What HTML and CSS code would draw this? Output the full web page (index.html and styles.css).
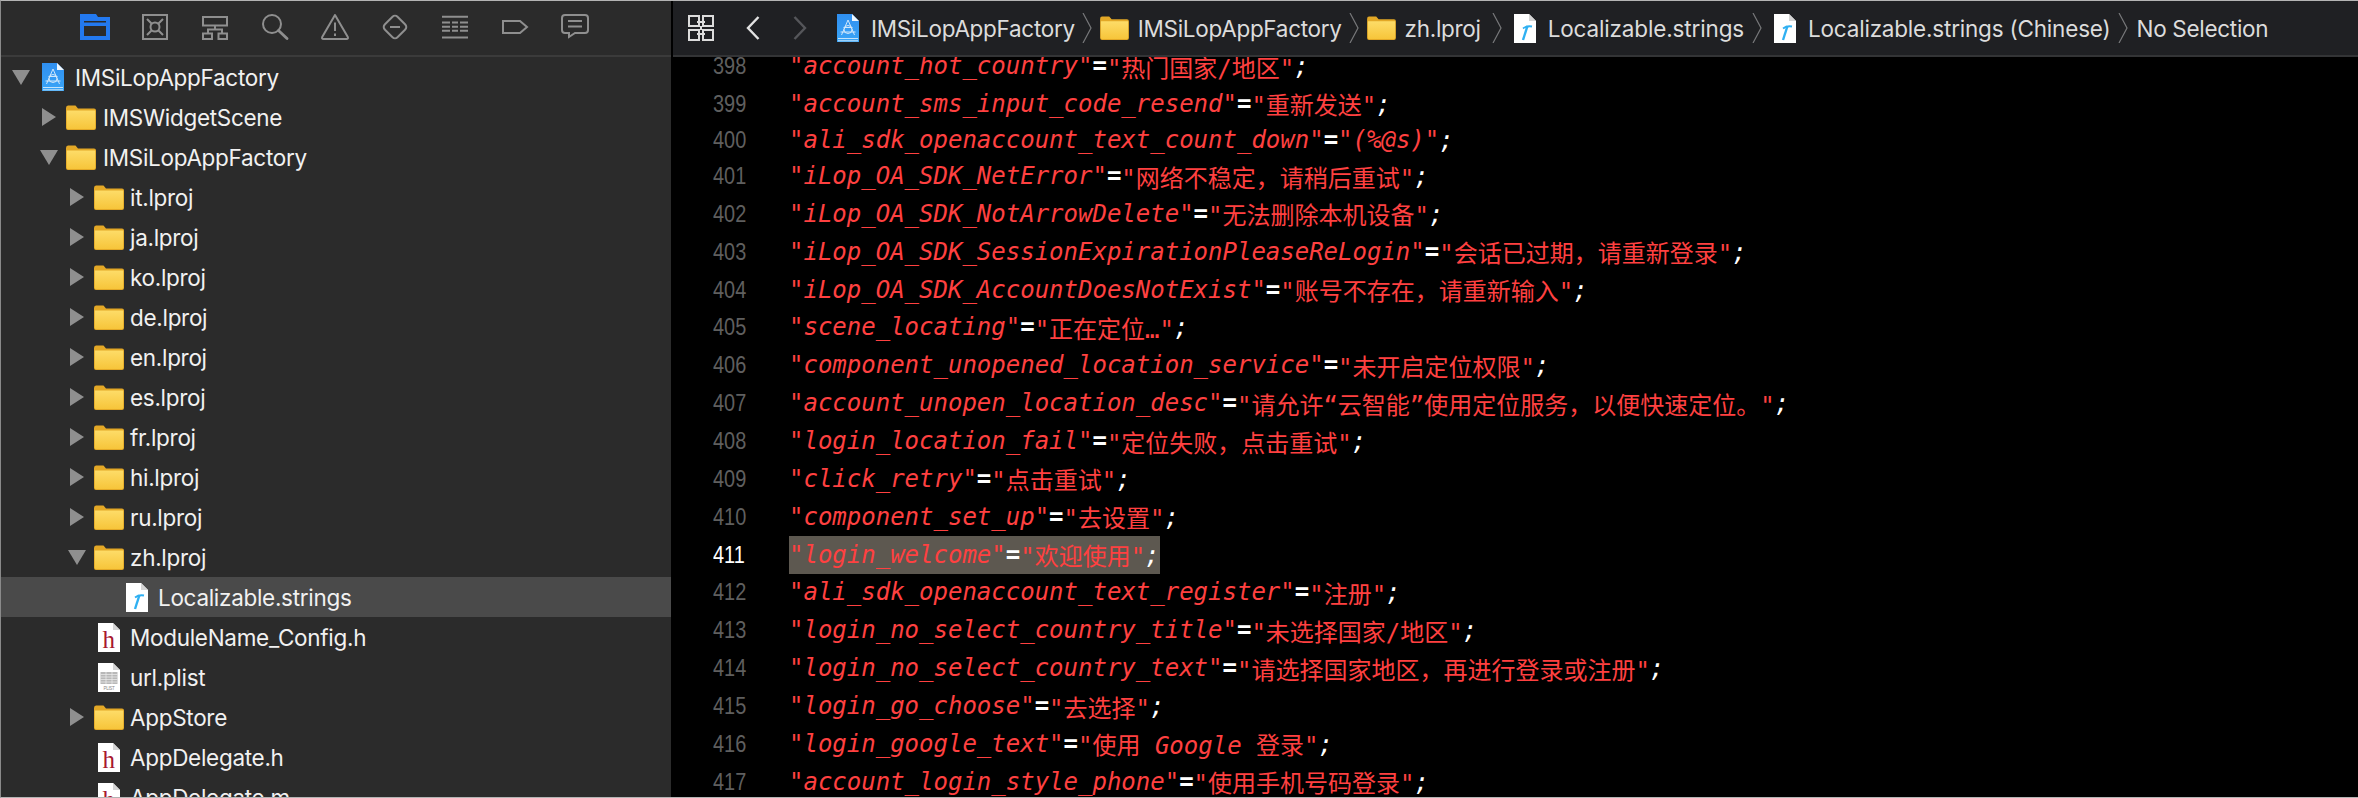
FILE: index.html
```html
<!DOCTYPE html>
<html lang="en">
<head>
<meta charset="utf-8">
<title>Xcode</title>
<link rel="stylesheet" href="styles.css">
</head>
<body>
<svg class="defs" width="0" height="0" aria-hidden="true">
  <defs>
    <linearGradient id="fold" x1="0" y1="0" x2="0" y2="1"><stop offset="0" stop-color="#fddc68"/><stop offset="1" stop-color="#f7c53a"/></linearGradient>
    <linearGradient id="blue" x1="0" y1="0" x2="0" y2="1"><stop offset="0" stop-color="#2f8ff0"/><stop offset="1" stop-color="#3aa5f7"/></linearGradient>
    <symbol id="folder" viewBox="0 0 30 25">
      <path d="M0 3Q0 0.500 2 0.500H9.500L12 3.500H28Q30 3.500 30 5.500V23Q30 25 28 25H2Q0 25 0 23Z" fill="#e3a826"/>
      <path d="M0.800 5.500H29.200V23Q29.200 24 28 24H2Q0.800 24 0.800 23Z" fill="url(#fold)"/>
    </symbol>
    <symbol id="app" viewBox="0 0 22 28">
      <path d="M0 0H15L22 7V28H0Z" fill="url(#blue)"/>
      <path d="M15 0L22 7H15Z" fill="#eef6fd"/>
      <path d="M1 24.500H21M1 26.800H21" stroke="#d5ebfc" stroke-width="0.900"/>
      <g fill="none" stroke="#cfe7fb" stroke-width="1"><path d="M11 6L4.500 21M11 6L17.500 21M3.500 18H18.500M6.500 13.500H15.500"/><circle cx="11" cy="15.500" r="4"/></g>
    </symbol>
    <symbol id="strings" viewBox="0 0 22 29">
      <path d="M0 0H15L22 7V29H0Z" fill="#fff"/>
      <path d="M15 0L22 7H15Z" fill="#d4d4d4"/>
      <path d="M13.500 12L9 26" stroke="#2fb0f2" stroke-width="2.400" fill="none"/>
      <path d="M9 14.500Q13 11.500 18 12.500" stroke="#2fb0f2" stroke-width="1.800" fill="none"/>
    </symbol>
    <symbol id="hfile" viewBox="0 0 22 29">
      <path d="M0 0H15L22 7V29H0Z" fill="#fff"/>
      <path d="M15 0L22 7H15Z" fill="#d4d4d4"/>
      <text x="4.500" y="25" class="hglyph">h</text>
    </symbol>
    <symbol id="plist" viewBox="0 0 22 29">
      <path d="M0 0H15L22 7V29H0Z" fill="#fff"/>
      <path d="M15 0L22 7H15Z" fill="#d4d4d4"/>
      <path d="M2.500 9H19.500V21H2.500Z" fill="#b8b8b8"/>
      <path d="M2.500 11.500H19.500M2.500 14H19.500M2.500 16.500H19.500M2.500 19H19.500M8 9V21M14 9V21" stroke="#eee" stroke-width="0.700"/>
      <text x="11" y="27.300" class="pglyph">PLIST</text>
    </symbol>
  </defs>
</svg>
<div class="window">
  <aside class="sidebar">
    <nav class="tabs">
      <svg class="tab" viewBox="0 0 30 26"><path fill-rule="evenodd" d="M0 0H16L18 3H30V26H0ZM4 7V8.500H26V7ZM4 12V22H26V12Z" fill="#2379f0"/></svg>
      <svg class="tab" viewBox="0 0 30 26"><g fill="none" stroke="#8f8f8f" stroke-width="2"><path d="M3 1H27V25H3Z"/><circle cx="15" cy="13" r="4.500"/><path d="M7 5L12 10M23 5L18 10M7 21L12 16M23 21L18 16"/></g></svg>
      <svg class="tab" viewBox="0 0 30 26"><g fill="none" stroke="#8f8f8f" stroke-width="2"><path d="M3 3H27V11.500H3ZM15 11.500V15.500M8 19.500V15.500H22V19.500M3 19.500H12V25H3ZM18.500 19.500H27V25H18.500Z"/></g></svg>
      <svg class="tab" viewBox="0 0 30 26"><g fill="none" stroke="#8f8f8f"><circle cx="12" cy="10" r="9" stroke-width="2"/><path d="M18.500 16.500L27 24.500" stroke-width="2.800" stroke-linecap="round"/></g></svg>
      <svg class="tab" viewBox="0 0 30 26"><g fill="none" stroke="#8f8f8f" stroke-width="2"><path d="M15 1L27.800 23Q28.500 25 26.500 25H3.500Q1.500 25 2.200 23Z" stroke-linejoin="round"/><path d="M15 8.500V17M15 19.500V22"/></g></svg>
      <svg class="tab" viewBox="0 0 30 26"><g fill="none" stroke="#8f8f8f" stroke-width="2"><rect x="6" y="4" width="18" height="18" rx="3.500" transform="rotate(45 15 13)"/><path d="M10 13H20"/></g></svg>
      <svg class="tab" viewBox="0 0 30 26"><path d="M2 2.800H28M2 8.500H10M12 8.500H18M20 8.500H28M2 12.700H10M12 12.700H18M20 12.700H28M2 16.800H10M12 16.800H18M20 16.800H28M2 23.500H28" fill="none" stroke="#8f8f8f" stroke-width="2"/></svg>
      <svg class="tab" viewBox="0 0 30 26"><path d="M3 7H20L27 13L20 19H3Z" fill="none" stroke="#8f8f8f" stroke-width="2"/></svg>
      <svg class="tab" viewBox="0 0 30 26"><path d="M5 1H25Q28 1 28 4V16Q28 19 25 19H15L9 23V19H5Q2 19 2 16V4Q2 1 5 1ZM8 7H22M8 12.500H22" fill="none" stroke="#8f8f8f" stroke-width="2"/></svg>
    </nav>
    <ul class="tree">
      <li class="row d0"><span class="tri open"></span><svg class="ico file root"><use href="#app"/></svg><span>IMSiLopAppFactory</span></li>
      <li class="row d1"><span class="tri"></span><svg class="ico fold"><use href="#folder"/></svg><span>IMSWidgetScene</span></li>
      <li class="row d1"><span class="tri open"></span><svg class="ico fold"><use href="#folder"/></svg><span>IMSiLopAppFactory</span></li>
      <li class="row d2"><span class="tri"></span><svg class="ico fold"><use href="#folder"/></svg><span>it.lproj</span></li>
      <li class="row d2"><span class="tri"></span><svg class="ico fold"><use href="#folder"/></svg><span>ja.lproj</span></li>
      <li class="row d2"><span class="tri"></span><svg class="ico fold"><use href="#folder"/></svg><span>ko.lproj</span></li>
      <li class="row d2"><span class="tri"></span><svg class="ico fold"><use href="#folder"/></svg><span>de.lproj</span></li>
      <li class="row d2"><span class="tri"></span><svg class="ico fold"><use href="#folder"/></svg><span>en.lproj</span></li>
      <li class="row d2"><span class="tri"></span><svg class="ico fold"><use href="#folder"/></svg><span>es.lproj</span></li>
      <li class="row d2"><span class="tri"></span><svg class="ico fold"><use href="#folder"/></svg><span>fr.lproj</span></li>
      <li class="row d2"><span class="tri"></span><svg class="ico fold"><use href="#folder"/></svg><span>hi.lproj</span></li>
      <li class="row d2"><span class="tri"></span><svg class="ico fold"><use href="#folder"/></svg><span>ru.lproj</span></li>
      <li class="row d2"><span class="tri open"></span><svg class="ico fold"><use href="#folder"/></svg><span>zh.lproj</span></li>
      <li class="row d3 selected"><svg class="ico file"><use href="#strings"/></svg><span>Localizable.strings</span></li>
      <li class="row d2"><span class="tri none"></span><svg class="ico file"><use href="#hfile"/></svg><span>ModuleName_Config.h</span></li>
      <li class="row d2"><span class="tri none"></span><svg class="ico file"><use href="#plist"/></svg><span>url.plist</span></li>
      <li class="row d2"><span class="tri"></span><svg class="ico fold"><use href="#folder"/></svg><span>AppStore</span></li>
      <li class="row d2"><span class="tri none"></span><svg class="ico file"><use href="#hfile"/></svg><span>AppDelegate.h</span></li>
      <li class="row d2"><span class="tri none"></span><svg class="ico file"><use href="#hfile"/></svg><span>AppDelegate.m</span></li>
    </ul>
  </aside>
  <main class="editor">
    <header class="crumbs">
      <svg class="grid-btn" viewBox="0 0 26 26"><g fill="none" stroke="#dcdcdc" stroke-width="2"><path d="M1 1H11V11H1ZM15 1H25V11H15ZM1 15H11V25H1ZM15 15H25V25H15Z"/><path d="M9 7H17M13 11V15M9 19H17"/></g></svg>
      <svg class="nav" viewBox="0 0 14 24"><path d="M12.500 1L2 12L12.500 23" fill="none" stroke="#e2e2e2" stroke-width="2.400"/></svg>
      <svg class="nav next" viewBox="0 0 14 24"><path d="M1.500 1L12 12L1.500 23" fill="none" stroke="#55565a" stroke-width="2.400"/></svg>
      <svg class="cico first"><use href="#app"/></svg><span class="tight">IMSiLopAppFactory</span>
      <svg class="sep" viewBox="0 0 10 30"><path d="M1 0L9 15L1 30" fill="none" stroke="#77787a" stroke-width="1.200"/></svg>
      <svg class="cfold"><use href="#folder"/></svg><span class="tight">IMSiLopAppFactory</span>
      <svg class="sep" viewBox="0 0 10 30"><path d="M1 0L9 15L1 30" fill="none" stroke="#77787a" stroke-width="1.200"/></svg>
      <svg class="cfold"><use href="#folder"/></svg><span class="roomy">zh.lproj</span>
      <svg class="sep" viewBox="0 0 10 30"><path d="M1 0L9 15L1 30" fill="none" stroke="#77787a" stroke-width="1.200"/></svg>
      <svg class="cico"><use href="#strings"/></svg><span class="wide">Localizable.strings</span>
      <svg class="sep" viewBox="0 0 10 30"><path d="M1 0L9 15L1 30" fill="none" stroke="#77787a" stroke-width="1.200"/></svg>
      <svg class="cico"><use href="#strings"/></svg><span class="wider">Localizable.strings (Chinese)</span>
      <svg class="sep" viewBox="0 0 10 30"><path d="M1 0L9 15L1 30" fill="none" stroke="#77787a" stroke-width="1.200"/></svg>
      <span>No Selection</span>
    </header>
    <div class="code">
      <div class="lines">
      <div class="line"><span class="no">398</span><span class="src"><i>"account_hot_country"</i><b>=</b><i>"<span class="cn">热门国家/地区</span>"</i><em>;</em></span></div>
      <div class="line"><span class="no">399</span><span class="src"><i>"account_sms_input_code_resend"</i><b>=</b><i>"<span class="cn">重新发送</span>"</i><em>;</em></span></div>
      <div class="line short"><span class="no">400</span><span class="src"><i>"ali_sdk_openaccount_text_count_down"</i><b>=</b><i>"(%@s)"</i><em>;</em></span></div>
      <div class="line"><span class="no">401</span><span class="src"><i>"iLop_OA_SDK_NetError"</i><b>=</b><i>"<span class="cn">网络不稳定，请稍后重试</span>"</i><em>;</em></span></div>
      <div class="line"><span class="no">402</span><span class="src"><i>"iLop_OA_SDK_NotArrowDelete"</i><b>=</b><i>"<span class="cn">无法删除本机设备</span>"</i><em>;</em></span></div>
      <div class="line"><span class="no">403</span><span class="src"><i>"iLop_OA_SDK_SessionExpirationPleaseReLogin"</i><b>=</b><i>"<span class="cn">会话已过期，请重新登录</span>"</i><em>;</em></span></div>
      <div class="line"><span class="no">404</span><span class="src"><i>"iLop_OA_SDK_AccountDoesNotExist"</i><b>=</b><i>"<span class="cn">账号不存在，请重新输入</span>"</i><em>;</em></span></div>
      <div class="line"><span class="no">405</span><span class="src"><i>"scene_locating"</i><b>=</b><i>"<span class="cn">正在定位…</span>"</i><em>;</em></span></div>
      <div class="line"><span class="no">406</span><span class="src"><i>"component_unopened_location_service"</i><b>=</b><i>"<span class="cn">未开启定位权限</span>"</i><em>;</em></span></div>
      <div class="line"><span class="no">407</span><span class="src"><i>"account_unopen_location_desc"</i><b>=</b><i>"<span class="cn">请允许“云智能”使用定位服务，以便快速定位。</span>"</i><em>;</em></span></div>
      <div class="line"><span class="no">408</span><span class="src"><i>"login_location_fail"</i><b>=</b><i>"<span class="cn">定位失败，点击重试</span>"</i><em>;</em></span></div>
      <div class="line"><span class="no">409</span><span class="src"><i>"click_retry"</i><b>=</b><i>"<span class="cn">点击重试</span>"</i><em>;</em></span></div>
      <div class="line"><span class="no">410</span><span class="src"><i>"component_set_up"</i><b>=</b><i>"<span class="cn">去设置</span>"</i><em>;</em></span></div>
      <div class="line current"><span class="no">411</span><span class="src"><i>"login_welcome"</i><b>=</b><i>"<span class="cn">欢迎使用</span>"</i><em>;</em></span></div>
      <div class="line"><span class="no">412</span><span class="src"><i>"ali_sdk_openaccount_text_register"</i><b>=</b><i>"<span class="cn">注册</span>"</i><em>;</em></span></div>
      <div class="line"><span class="no">413</span><span class="src"><i>"login_no_select_country_title"</i><b>=</b><i>"<span class="cn">未选择国家/地区</span>"</i><em>;</em></span></div>
      <div class="line"><span class="no">414</span><span class="src"><i>"login_no_select_country_text"</i><b>=</b><i>"<span class="cn">请选择国家地区，再进行登录或注册</span>"</i><em>;</em></span></div>
      <div class="line"><span class="no">415</span><span class="src"><i>"login_go_choose"</i><b>=</b><i>"<span class="cn">去选择</span>"</i><em>;</em></span></div>
      <div class="line"><span class="no">416</span><span class="src"><i>"login_google_text"</i><b>=</b><i>"<span class="cn">使用</span> Google <span class="cn">登录</span>"</i><em>;</em></span></div>
      <div class="line"><span class="no">417</span><span class="src"><i>"account_login_style_phone"</i><b>=</b><i>"<span class="cn">使用手机号码登录</span>"</i><em>;</em></span></div>
      </div>
    </div>
  </main>
</div>
</body>
</html>
```
FILE: styles.css
```css
* { box-sizing: border-box; }
html, body { margin: 0; padding: 0; background: #000; }
.defs { position: absolute; }
.hglyph { font-family: "Liberation Serif", serif; font-size: 25px; fill: #a8182f; }
.pglyph { font-family: "Liberation Sans", sans-serif; font-size: 4.500px; fill: #888; text-anchor: middle; }
.window {
  width: 2358px; height: 798px; display: flex; overflow: hidden;
  border-top: 1px solid #b4b4b4; border-bottom: 1px solid #b4b4b4; border-left: 1px solid #8a8a8a;
}
.sidebar {
  width: 670px; flex: none; background: #2b2b2b; display: flex; flex-direction: column; overflow: hidden;
  font-family: Inter, "Liberation Sans", sans-serif; color: #f1f1f1;
}
.tabs {
  height: 56px; flex: none; display: flex; gap: 30px; padding: 13px 0 0 79px;
  border-bottom: 2px solid #3b3b3b;
}
.tab { width: 30px; height: 26px; flex: none; }
.tree { list-style: none; margin: 0; padding: 0; }
.row { height: 40px; display: flex; align-items: center; font-size: 22.500px; white-space: nowrap; letter-spacing: -.3px; }
.row.selected { background: #4a4a4a; }
.d0 { padding-left: 11px; }
.d1 { padding-left: 41px; }
.d2 { padding-left: 69px; }
.d3 { padding-left: 125px; }
.tri { width: 0; height: 0; flex: none; border-style: solid; border-width: 9px 0 9px 14px; border-color: transparent transparent transparent #8f8f8f; margin-right: 10px; }
.tri.open { border-width: 15px 9px 0 9px; border-color: #8f8f8f transparent transparent transparent; margin: 0 8px 0 -2px; }
.d0 .tri.open { margin: 0 12px 0 0; }
.tri.none { border-color: transparent; }
.ico { flex: none; }
.ico.fold { width: 30px; height: 25px; margin-right: 6px; }
.d1 .ico.fold { margin-right: 7px; }
.ico.file { width: 22px; height: 29px; margin: 0 10px 0 4px; }
.d3 .ico.file { margin: 0 10px 0 0; }
.ico.file.root { margin: 0 11px 0 0; height: 28px; }
.editor { flex: 1; min-width: 0; display: flex; flex-direction: column; background: #000; border-left: 2px solid #000; overflow: hidden; }
.crumbs {
  height: 56px; flex: none; display: flex; align-items: center; padding-left: 15px; background: #1f2023;
  border-bottom: 2px solid #333436; color: #dcdcdc; white-space: nowrap; font-size: 22.500px; letter-spacing: -.3px;
  font-family: Inter, "Liberation Sans", sans-serif;
}
.crumbs .tight { margin-right: -1px; }
.crumbs .roomy { margin-right: 3px; }
.crumbs .wide { letter-spacing: -.15px; }
.crumbs .wider { letter-spacing: -.2px; }
.grid-btn { width: 26px; height: 26px; flex: none; margin-right: 32px; }
.nav { width: 14px; height: 24px; flex: none; }
.nav.next { margin-left: 33px; }
.cico { width: 22px; height: 29px; flex: none; margin: 0 12px 0 4px; }
.cico.first { margin: 0 12px 0 30px; height: 28px; }
.cfold { width: 29px; height: 24px; flex: none; margin-right: 9px; }
.sep { width: 10px; height: 30px; flex: none; margin: 0 8px; }
.code { flex: 1; min-height: 0; overflow: hidden; font-family: "DejaVu Sans Mono", "Noto Sans CJK SC", monospace; font-size: 24px; }
.lines { margin-top: -9.800px; }
.line { height: 37.860px; display: flex; align-items: center; white-space: nowrap; }
.line.short { height: 34.200px; }
.no { width: 116px; padding-left: 40px; flex: none; color: #5f5f5f; font-family: "Liberation Sans", sans-serif; font-size: 24px; transform: scaleX(.83); transform-origin: 40px 50%; }
.src { display: inline-flex; align-items: center; height: 100%; }
.src i { font-style: italic; color: #ff4040; white-space: pre; }
.src .cn { font-style: normal; }
.src b { font-weight: 700; color: #fff; }
.src em { font-style: italic; color: #fff; }
.current .no { color: #fff; }
.current .src { background: #5d5850; }
```
